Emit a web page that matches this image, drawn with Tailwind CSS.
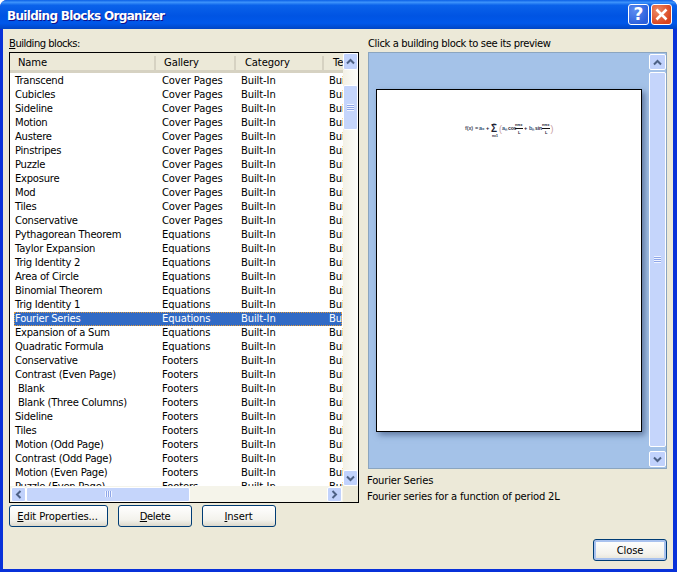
<!DOCTYPE html>
<html lang="en">
<head>
<meta charset="UTF-8">
<title>Building Blocks Organizer</title>
<script src="https://cdn.jsdelivr.net/npm/@tailwindcss/browser@4"></script>
</head>
<body class="bg-white">
<div class="w-[677px] h-[572px] flex flex-col overflow-hidden rounded-t-[7px] font-['DejaVu_Sans',sans-serif] text-[10px] tracking-[-0.12px] text-black bg-[#0831d9]">

  <!-- title bar -->
  <div class="h-[29px] shrink-0 flex items-center pl-[7px] pr-[5px] bg-[linear-gradient(180deg,#0a5fe6_0%,#3d93fb_8%,#0a62ea_18%,#0054e3_55%,#0058ea_80%,#0045c4_100%)]">
    <span class="flex-1 pt-[2px] text-[12px] font-bold tracking-[-0.68px] text-white [text-shadow:1px_1px_0_#0f1089]">Building Blocks Organizer</span>
    <div class="flex gap-[2px]">
      <div class="w-[21px] h-[21px] rounded-[3px] border border-white bg-[radial-gradient(circle_at_30%_30%,#5c8cf0,#2a5fdc_75%)] flex items-center justify-center text-white font-bold text-[17px] tracking-normal leading-none">?</div>
      <div class="w-[21px] h-[21px] rounded-[3px] border border-white bg-[radial-gradient(circle_at_30%_30%,#ec8a66,#d9431d_75%)] flex items-center justify-center">
        <svg width="15" height="15" viewBox="0 0 15 15"><path d="M2.5 2.5l10 10M12.5 2.5l-10 10" stroke="#fff" stroke-width="2.6" fill="none"/></svg>
      </div>
    </div>
  </div>

  <!-- dialog body -->
  <div class="flex-1 flex flex-col bg-[#ece9d8] ml-[3px] mr-[4px] mb-[3px] pl-[6px] pr-[6px]">
    <div class="flex gap-[9px]">

      <!-- left column -->
      <div class="w-[350px] shrink-0">
        <div class="h-[23px] pt-[8px] leading-[14px] tracking-[-0.5px]"><u>B</u>uilding blocks:</div>
        <div class="h-[451px] border border-black bg-white flex">
          <div class="w-[333px] flex flex-col">
            <div class="h-[20px] shrink-0 flex items-center bg-[#ece9d8] border-b-[3px] border-[#d6d2c2] pt-[2px]">
              <div class="w-[146px] pl-[8px] border-r-2 border-[#d6d2c2] leading-[14px]">Name</div>
              <div class="w-[80px] pl-[8px] border-r-2 border-[#d6d2c2] leading-[14px]">Gallery</div>
              <div class="w-[88px] pl-[9px] border-r-2 border-[#d6d2c2] leading-[14px]">Category</div>
              <div class="pl-[9px] leading-[14px] w-[19px] overflow-hidden whitespace-nowrap">Template</div>
            </div>
            <div class="h-[413px] pt-[1px] overflow-hidden isolate">
              <table class="table-fixed w-[395px] border-collapse [&_td]:h-[14px] [&_td]:p-0 [&_td]:pl-[6px] [&_td]:leading-[14px] [&_td]:whitespace-nowrap [&_td:first-child]:pl-[5px] [&_td:first-child]:tracking-[-0.25px]">
                <colgroup><col class="w-[146px]"><col class="w-[79px]"><col class="w-[88px]"><col class="w-[82px]"></colgroup>
                <tbody>
                <tr><td>Transcend</td><td>Cover Pages</td><td>Built-In</td><td>Built-In</td></tr>
                <tr><td>Cubicles</td><td>Cover Pages</td><td>Built-In</td><td>Built-In</td></tr>
                <tr><td>Sideline</td><td>Cover Pages</td><td>Built-In</td><td>Built-In</td></tr>
                <tr><td>Motion</td><td>Cover Pages</td><td>Built-In</td><td>Built-In</td></tr>
                <tr><td>Austere</td><td>Cover Pages</td><td>Built-In</td><td>Built-In</td></tr>
                <tr><td>Pinstripes</td><td>Cover Pages</td><td>Built-In</td><td>Built-In</td></tr>
                <tr><td>Puzzle</td><td>Cover Pages</td><td>Built-In</td><td>Built-In</td></tr>
                <tr><td>Exposure</td><td>Cover Pages</td><td>Built-In</td><td>Built-In</td></tr>
                <tr><td>Mod</td><td>Cover Pages</td><td>Built-In</td><td>Built-In</td></tr>
                <tr><td>Tiles</td><td>Cover Pages</td><td>Built-In</td><td>Built-In</td></tr>
                <tr><td>Conservative</td><td>Cover Pages</td><td>Built-In</td><td>Built-In</td></tr>
                <tr><td>Pythagorean Theorem</td><td>Equations</td><td>Built-In</td><td>Built-In</td></tr>
                <tr><td>Taylor Expansion</td><td>Equations</td><td>Built-In</td><td>Built-In</td></tr>
                <tr><td>Trig Identity 2</td><td>Equations</td><td>Built-In</td><td>Built-In</td></tr>
                <tr><td>Area of Circle</td><td>Equations</td><td>Built-In</td><td>Built-In</td></tr>
                <tr><td>Binomial Theorem</td><td>Equations</td><td>Built-In</td><td>Built-In</td></tr>
                <tr><td>Trig Identity 1</td><td>Equations</td><td>Built-In</td><td>Built-In</td></tr>
                <tr class="text-white"><td class="relative"><div class="absolute -z-10 left-[4px] top-0 w-[328px] h-[14px] bg-[#316ac5] border border-dotted border-[#e09a3c]"></div>Fourier Series</td><td>Equations</td><td>Built-In</td><td>Built-In</td></tr>
                <tr><td>Expansion of a Sum</td><td>Equations</td><td>Built-In</td><td>Built-In</td></tr>
                <tr><td>Quadratic Formula</td><td>Equations</td><td>Built-In</td><td>Built-In</td></tr>
                <tr><td>Conservative</td><td>Footers</td><td>Built-In</td><td>Built-In</td></tr>
                <tr><td>Contrast (Even Page)</td><td>Footers</td><td>Built-In</td><td>Built-In</td></tr>
                <tr><td>&nbsp;Blank</td><td>Footers</td><td>Built-In</td><td>Built-In</td></tr>
                <tr><td>&nbsp;Blank (Three Columns)</td><td>Footers</td><td>Built-In</td><td>Built-In</td></tr>
                <tr><td>Sideline</td><td>Footers</td><td>Built-In</td><td>Built-In</td></tr>
                <tr><td>Tiles</td><td>Footers</td><td>Built-In</td><td>Built-In</td></tr>
                <tr><td>Motion (Odd Page)</td><td>Footers</td><td>Built-In</td><td>Built-In</td></tr>
                <tr><td>Contrast (Odd Page)</td><td>Footers</td><td>Built-In</td><td>Built-In</td></tr>
                <tr><td>Motion (Even Page)</td><td>Footers</td><td>Built-In</td><td>Built-In</td></tr>
                <tr><td>Puzzle (Even Page)</td><td>Footers</td><td>Built-In</td><td>Built-In</td></tr>
                </tbody>
              </table>
            </div>
            <!-- horizontal scrollbar -->
            <div class="h-[16px] shrink-0 flex items-center pl-[1px] bg-[#f5f4ea]">
              <div class="w-[15px] h-[15px] rounded-[2px] border border-white bg-[#c1d2fc] flex items-center justify-center">
                <svg width="7" height="9" viewBox="0 0 7 9"><path d="M5.5 1L2 4.5L5.5 8" stroke="#4d6185" stroke-width="2" fill="none"/></svg>
              </div>
              <div class="w-[164px] h-[15px] rounded-[2px] border border-white bg-[#c5d5fb] flex items-center justify-center">
                <div class="w-[7px] h-[6px] bg-[repeating-linear-gradient(90deg,#f0f4ff_0_1px,#8ea6e8_1px_2px)]"></div>
              </div>
              <div class="flex-1"></div>
              <div class="w-[15px] h-[15px] rounded-[2px] border border-white bg-[#c1d2fc] flex items-center justify-center mr-[1px]">
                <svg width="7" height="9" viewBox="0 0 7 9"><path d="M1.5 1L5 4.5L1.5 8" stroke="#4d6185" stroke-width="2" fill="none"/></svg>
              </div>
            </div>
          </div>
          <!-- vertical scrollbar -->
          <div class="w-[15px] shrink-0 flex flex-col bg-[linear-gradient(90deg,#f3f1e6,#fdfdfa)]">
            <div class="h-[17px] shrink-0 rounded-[2px] border border-white bg-[#c1d2fc] flex items-center justify-center">
              <svg width="9" height="7" viewBox="0 0 9 7"><path d="M1 5.5L4.5 2L8 5.5" stroke="#4d6185" stroke-width="2" fill="none"/></svg>
            </div>
            <div class="h-[15px] shrink-0"></div>
            <div class="h-[45px] shrink-0 rounded-[2px] border border-white bg-[#c5d5fb] flex items-center justify-center">
              <div class="w-[7px] h-[7px] bg-[repeating-linear-gradient(180deg,#f0f4ff_0_1px,#8ea6e8_1px_2px)]"></div>
            </div>
            <div class="flex-1"></div>
            <div class="h-[16px] shrink-0 rounded-[2px] border border-white bg-[#c1d2fc] flex items-center justify-center">
              <svg width="9" height="7" viewBox="0 0 9 7"><path d="M1 1.5L4.5 5L8 1.5" stroke="#4d6185" stroke-width="2" fill="none"/></svg>
            </div>
            <div class="h-[16px] shrink-0 bg-[#ece9d8]"></div>
          </div>
        </div>
        <!-- left buttons -->
        <div class="flex gap-[10px] mt-[2px]">
          <div class="w-[99px] h-[22px] rounded-[3px] border border-[#003c74] bg-[linear-gradient(180deg,#ffffff,#f3f2ec_70%,#dcd8cb)] flex items-center justify-center pr-[2px]"><span><u>E</u>dit Properties...</span></div>
          <div class="w-[74px] h-[22px] rounded-[3px] border border-[#003c74] bg-[linear-gradient(180deg,#ffffff,#f3f2ec_70%,#dcd8cb)] flex items-center justify-center"><span class="tracking-[-0.4px]"><u>D</u>elete</span></div>
          <div class="w-[74px] h-[22px] rounded-[3px] border border-[#003c74] bg-[linear-gradient(180deg,#ffffff,#f3f2ec_70%,#dcd8cb)] flex items-center justify-center pr-[1px]"><span><u>I</u>nsert</span></div>
        </div>
      </div>

      <!-- right column -->
      <div class="w-[299px] shrink-0">
        <div class="h-[23px] pt-[8px] leading-[14px] tracking-[-0.37px] whitespace-nowrap">Click a building block to see its preview</div>
        <div class="h-[417px] border border-[#8ba5bf] bg-[#a4c2e8] flex">
          <div class="w-[280px] pl-[7px] pt-[36px]">
            <div class="w-[266px] h-[343px] bg-white border border-black shadow-[3px_3px_6px_rgba(40,60,100,0.55)] flex justify-center pt-[31px]">
              <svg width="90" height="16" viewBox="0 0 90 16" class="font-['Liberation_Sans',sans-serif]" font-size="5.5" font-weight="bold" fill="#223">
                <text x="1" y="9" fill="#556">f(x)</text><text x="11" y="9">=</text>
                <text x="15" y="9" fill="#357">a₀</text><text x="22" y="9">+</text>
                <text x="27" y="11" font-size="10">Σ</text>
                <text x="29" y="3.5" font-size="3.5">∞</text><text x="28" y="15.5" font-size="3.5">n=1</text>
                <text x="35" y="10.5" font-size="9" fill="#c9a0a0" font-weight="normal">(</text>
                <text x="38" y="9" fill="#357">aₙ</text><text x="44" y="9" font-size="5">cos</text>
                <path d="M51 7.5h8M78 7.5h8" stroke="#111" stroke-width="1"/>
                <text x="51" y="5" font-size="4">nπx</text><text x="54" y="12.5" font-size="4">L</text>
                <text x="60" y="9">+</text>
                <text x="65" y="9" fill="#357">bₙ</text><text x="71" y="9" font-size="5">sin</text>
                <text x="78" y="5" font-size="4">nπx</text><text x="81" y="12.5" font-size="4">L</text>
                <text x="86.5" y="10.5" font-size="9" fill="#c9a0a0" font-weight="normal">)</text>
              </svg>
            </div>
          </div>
          <!-- preview scrollbar -->
          <div class="w-[17px] flex flex-col py-[1px] ml-auto">
            <div class="h-[16px] shrink-0 rounded-[2px] border border-white bg-[#c1d2fc] flex items-center justify-center">
              <svg width="9" height="7" viewBox="0 0 9 7"><path d="M1 5.5L4.5 2L8 5.5" stroke="#4d6185" stroke-width="2" fill="none"/></svg>
            </div>
            <div class="h-[375px] mt-[2px] shrink-0 rounded-[2px] border border-white bg-[#c5d5fb] flex items-center justify-center">
              <div class="w-[7px] h-[7px] bg-[repeating-linear-gradient(180deg,#f0f4ff_0_1px,#8ea6e8_1px_2px)]"></div>
            </div>
            <div class="flex-1"></div>
            <div class="h-[16px] shrink-0 rounded-[2px] border border-white bg-[#c1d2fc] flex items-center justify-center">
              <svg width="9" height="7" viewBox="0 0 9 7"><path d="M1 1.5L4.5 5L8 1.5" stroke="#4d6185" stroke-width="2" fill="none"/></svg>
            </div>
          </div>
        </div>
        <div class="mt-[4px] leading-[16px] -ml-[1px] tracking-[-0.2px]">Fourier Series</div>
        <div class="leading-[16px] -ml-[1px] tracking-[-0.2px]">Fourier series for a function of period 2L</div>
      </div>
    </div>

    <div class="flex justify-end mt-[12px]">
      <div class="w-[74px] h-[22px] rounded-[3px] border border-[#003c74] bg-[linear-gradient(180deg,#ffffff,#f3f2ec_70%,#e6e3d6)] shadow-[inset_0_0_0_2px_#a9c2ee] flex items-center justify-center">Close</div>
    </div>
  </div>
</div>
</body>
</html>
